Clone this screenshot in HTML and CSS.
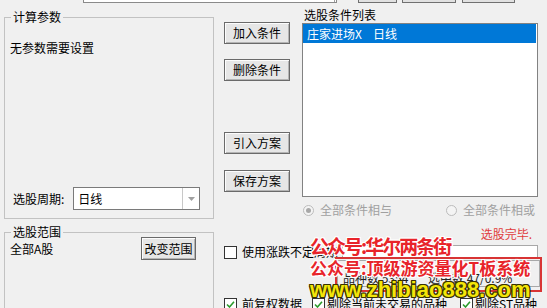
FILE: index.html
```html
<!DOCTYPE html>
<html>
<head>
<meta charset="utf-8">
<link rel="stylesheet" href="styles.css">
</head>
<body>
<div class="topstrip">
  <div class="ts-box"><div class="ts-div"></div></div>
  <div class="ts-b ts-b1"></div>
  <div class="ts-b ts-b2"></div>
  <div class="ts-b ts-b3"></div>
</div>
<div class="main">
  <div class="left">
    <fieldset class="grp grp1">
      <legend>计算参数</legend>
      <div class="grp1-body">
        <div class="noparam">无参数需要设置</div>
        <div class="period-row">
          <span class="period-label">选股周期:</span>
          <div class="combo">
            <span class="combo-text">日线</span>
            <span class="combo-btn"><svg width="7" height="4" viewBox="0 0 7 4"><path d="M0 0H7L3.5 4Z" fill="#a0a0a0"/></svg></span>
          </div>
        </div>
      </div>
    </fieldset>
    <fieldset class="grp grp2">
      <legend>选股范围</legend>
      <div class="range-row">
        <span>全部A股</span>
        <button class="btn btn-range">改变范围</button>
      </div>
    </fieldset>
  </div>
  <div class="right">
    <div class="upper">
      <div class="btncol">
        <button class="btn b1">加入条件</button>
        <button class="btn b2">删除条件</button>
        <button class="btn b3">引入方案</button>
        <button class="btn b4">保存方案</button>
      </div>
      <div class="listcol">
        <div class="listlabel">选股条件列表</div>
        <div class="listbox">
          <div class="sel">庄家进场X<span class="gap"></span>日线</div>
        </div>
        <div class="radios">
          <label class="radio"><span class="rcircle on"></span>全部条件相与</label>
          <label class="radio"><span class="rcircle"></span>全部条件相或</label>
        </div>
      </div>
    </div>
    <div class="done">选股完毕.</div>
    <div class="cbrow1">
      <span class="cbox"></span>
      <span class="cbtext">使用涨跌不定周期</span>
      <span class="edit"></span>
    </div>
    <div class="status"><span class="st1">品种数 5354</span><span>选中数 47/0.9%</span></div>
    <div class="cbrow2">
      <span class="cbox"><svg width="11" height="11" viewBox="0 0 11 11"><path d="M2 5.5L4.5 8L9 2.8" stroke="#2b9b2b" stroke-width="1.6" fill="none"/></svg></span>
      <span class="cbtext t1">前复权数据</span>
      <span class="cbox c2"><svg width="11" height="11" viewBox="0 0 11 11"><path d="M2 5.5L4.5 8L9 2.8" stroke="#2b9b2b" stroke-width="1.6" fill="none"/></svg></span>
      <span class="cbtext t2">剔除当前未交易的品种</span>
      <span class="cbox c3"><svg width="11" height="11" viewBox="0 0 11 11"><path d="M2 5.5L4.5 8L9 2.8" stroke="#2b9b2b" stroke-width="1.6" fill="none"/></svg></span>
      <span class="cbtext t3">剔除ST品种</span>
    </div>
  </div>
</div>
<div class="wm-rect"></div>
<div class="wm wm1">公众号:华尔两条街</div>
<div class="wm wm2">公众号:顶级游资量化T板系统</div>
<div class="wm wm3">www.zhibiao888.com</div>
</body>
</html>
```
FILE: styles.css
```css
html, body {
  margin: 0;
  padding: 0;
}
body {
  width: 547px;
  height: 308px;
  overflow: hidden;
  position: relative;
  background: #f0f0f0;
  color: #000;
  font-family: "Noto Sans CJK SC", "Microsoft YaHei", sans-serif;
  font-size: 12px;
  line-height: 14px;
}
.topstrip {
  height: 3px;
  display: flex;
  align-items: flex-end;
}
.ts-box {
  margin-left: 83px;
  width: 254px;
  height: 3px;
  box-sizing: border-box;
  border: 1px solid #8a8a8a;
  border-top: none;
  background: #fff;
  display: flex;
  justify-content: flex-end;
}
.ts-div {
  width: 1px;
  border-left: 1px solid #a0a0a0;
}
.ts-b {
  height: 3px;
  box-sizing: border-box;
  border: 1px solid #707070;
  border-top: none;
  background: #e1e1e1;
}
.ts-b1 { margin-left: 21px; width: 39px; }
.ts-b2 { margin-left: 5px; width: 54px; }
.ts-b3 { margin-left: 6px; width: 53px; }

.main {
  display: flex;
}
.left {
  width: 210px;
  margin-left: 4px;
  flex: none;
}
.grp {
  margin: 0;
  padding: 0;
  border: 1px solid #c2c2c2;
  min-width: 0;
  box-sizing: border-box;
}
.grp legend {
  padding: 0 2px;
  margin-left: 6px;
  line-height: 14px;
}
.grp1 {
  margin-top: 7px;
  height: 209px;
}
.grp1-body {
  height: 194px;
  box-sizing: border-box;
  padding: 17px 0 8px 5px;
  display: flex;
  flex-direction: column;
  justify-content: space-between;
}
.period-row {
  display: flex;
  align-items: center;
  margin-left: 3px;
}
.combo {
  display: flex;
  width: 127px;
  height: 23px;
  margin-left: 9px;
  box-sizing: border-box;
  border: 1px solid #7a7a7a;
  background: #fff;
}
.combo-text {
  flex: 1;
  padding-left: 4px;
  line-height: 21px;
}
.combo-btn {
  width: 16px;
  border-left: 1px solid #c8c8c8;
  display: flex;
  align-items: center;
  justify-content: center;
}
.grp2 {
  margin-top: 6px;
  height: 100px;
}
.range-row {
  display: flex;
  align-items: center;
  justify-content: space-between;
  margin-top: -2px;
  padding-left: 5px;
  padding-right: 17px;
}
.btn {
  font: inherit;
  line-height: 14px;
  color: #000;
  padding: 0;
  margin: 0;
  height: 22px;
  width: 66px;
  box-sizing: border-box;
  border: 1px solid #6a6a6a;
  background: #e6e6e6;
  box-shadow: inset 1px 1px 0 #fcfcfc, inset -1px -1px 0 #b4b4b4;
  display: block;
}
.btn-range {
  width: 55px;
  height: 23px;
}

.right {
  flex: 1;
  min-width: 0;
  padding-left: 10px;
  padding-right: 9px;
}
.upper {
  display: flex;
}
.btncol {
  width: 66px;
  flex: none;
  padding-top: 19px;
  display: flex;
  flex-direction: column;
}
.b2 { margin-top: 15px; }
.b3 { margin-top: 51px; }
.b4 { margin-top: 16px; }
.listcol {
  margin-left: 12px;
  flex: 1;
}
.listlabel {
  margin-top: 5px;
  padding-left: 2px;
}
.listbox {
  margin-top: 1px;
  height: 174px;
  box-sizing: border-box;
  border: 1px solid #828282;
  background: #fff;
  padding-right: 1px;
}
.sel {
  height: 19px;
  line-height: 19px;
  padding-left: 4px;
  background: #0078d7;
  color: #fff;
}
.gap {
  display: inline-block;
  width: 11px;
}
.radios {
  display: flex;
  justify-content: space-between;
  align-items: center;
  margin-top: 6px;
  height: 14px;
  padding-left: 1px;
  padding-right: 3px;
  color: #a0a0a0;
}
.radio {
  display: flex;
  align-items: center;
  gap: 6px;
}
.rcircle {
  width: 11px;
  height: 11px;
  box-sizing: border-box;
  border: 1px solid #bcbcbc;
  border-radius: 50%;
  background: #f4f4f4;
  display: flex;
  align-items: center;
  justify-content: center;
}
.rcircle.on::after {
  content: "";
  width: 5px;
  height: 5px;
  border-radius: 50%;
  background: #a8a8a8;
}
.done {
  margin-top: 10px;
  text-align: right;
  padding-right: 6px;
  color: #e03c3c;
}
.cbrow1 {
  display: flex;
  align-items: center;
  margin-top: 4px;
  height: 14px;
  white-space: nowrap;
}
.cbox {
  width: 13px;
  height: 13px;
  flex: none;
  box-sizing: border-box;
  border: 1px solid #333;
  background: #fff;
  display: flex;
  align-items: center;
  justify-content: center;
}
.cbtext {
  margin-left: 5px;
  flex: none;
  white-space: nowrap;
}
.edit {
  flex: 1;
  height: 14px;
  margin-left: 4px;
  box-sizing: border-box;
  border: 1px solid #a8a8a8;
  background: #fff;
}
.status {
  margin-top: 1px;
  margin-left: 113px;
  margin-right: -2px;
  height: 27px;
  box-sizing: border-box;
  border: 1px solid #a8a8a8;
  padding: 10px 0 0 5px;
  color: #222;
  white-space: nowrap;
}
.st1 {
  display: inline-block;
  width: 85px;
}
.cbrow2 {
  margin-top: 10px;
  display: flex;
  align-items: center;
  height: 14px;
  white-space: nowrap;
}
.c2 { margin-left: 10px; }
.c3 { margin-left: 13px; }
.t2, .t3 { margin-left: 2px; }

.wm {
  position: absolute;
  left: 310px;
  white-space: nowrap;
  font-weight: 700;
}
.wm1, .wm2 {
  color: #e8242a;
  text-shadow: 1px 0 0 #fff, -1px 0 0 #fff, 0 1px 0 #fff, 0 -1px 0 #fff,
    1px 1px 0 #fff, -1px -1px 0 #fff, 1px -1px 0 #fff, -1px 1px 0 #fff;
}
.wm1 {
  top: 235px;
  font-size: 19px;
  line-height: 22px;
  letter-spacing: -2px;
}
.wm2 {
  top: 258px;
  font-size: 17px;
  line-height: 20px;
}
.wm3 {
  top: 278px;
  font-family: "Liberation Sans", Arial, sans-serif;
  font-size: 22px;
  line-height: 24px;
  color: #f3e60a;
  text-shadow: 1px 0 0 #3a3300, -1px 0 0 #3a3300, 0 1px 0 #3a3300, 0 -1px 0 #3a3300,
    1px 1px 0 #3a3300, -1px -1px 0 #3a3300, 1px -1px 0 #3a3300, -1px 1px 0 #3a3300;
}
.wm-rect {
  position: absolute;
  left: 335px;
  top: 257px;
  width: 207px;
  height: 35px;
  box-sizing: border-box;
  border: 2px solid #d83434;
}
```
